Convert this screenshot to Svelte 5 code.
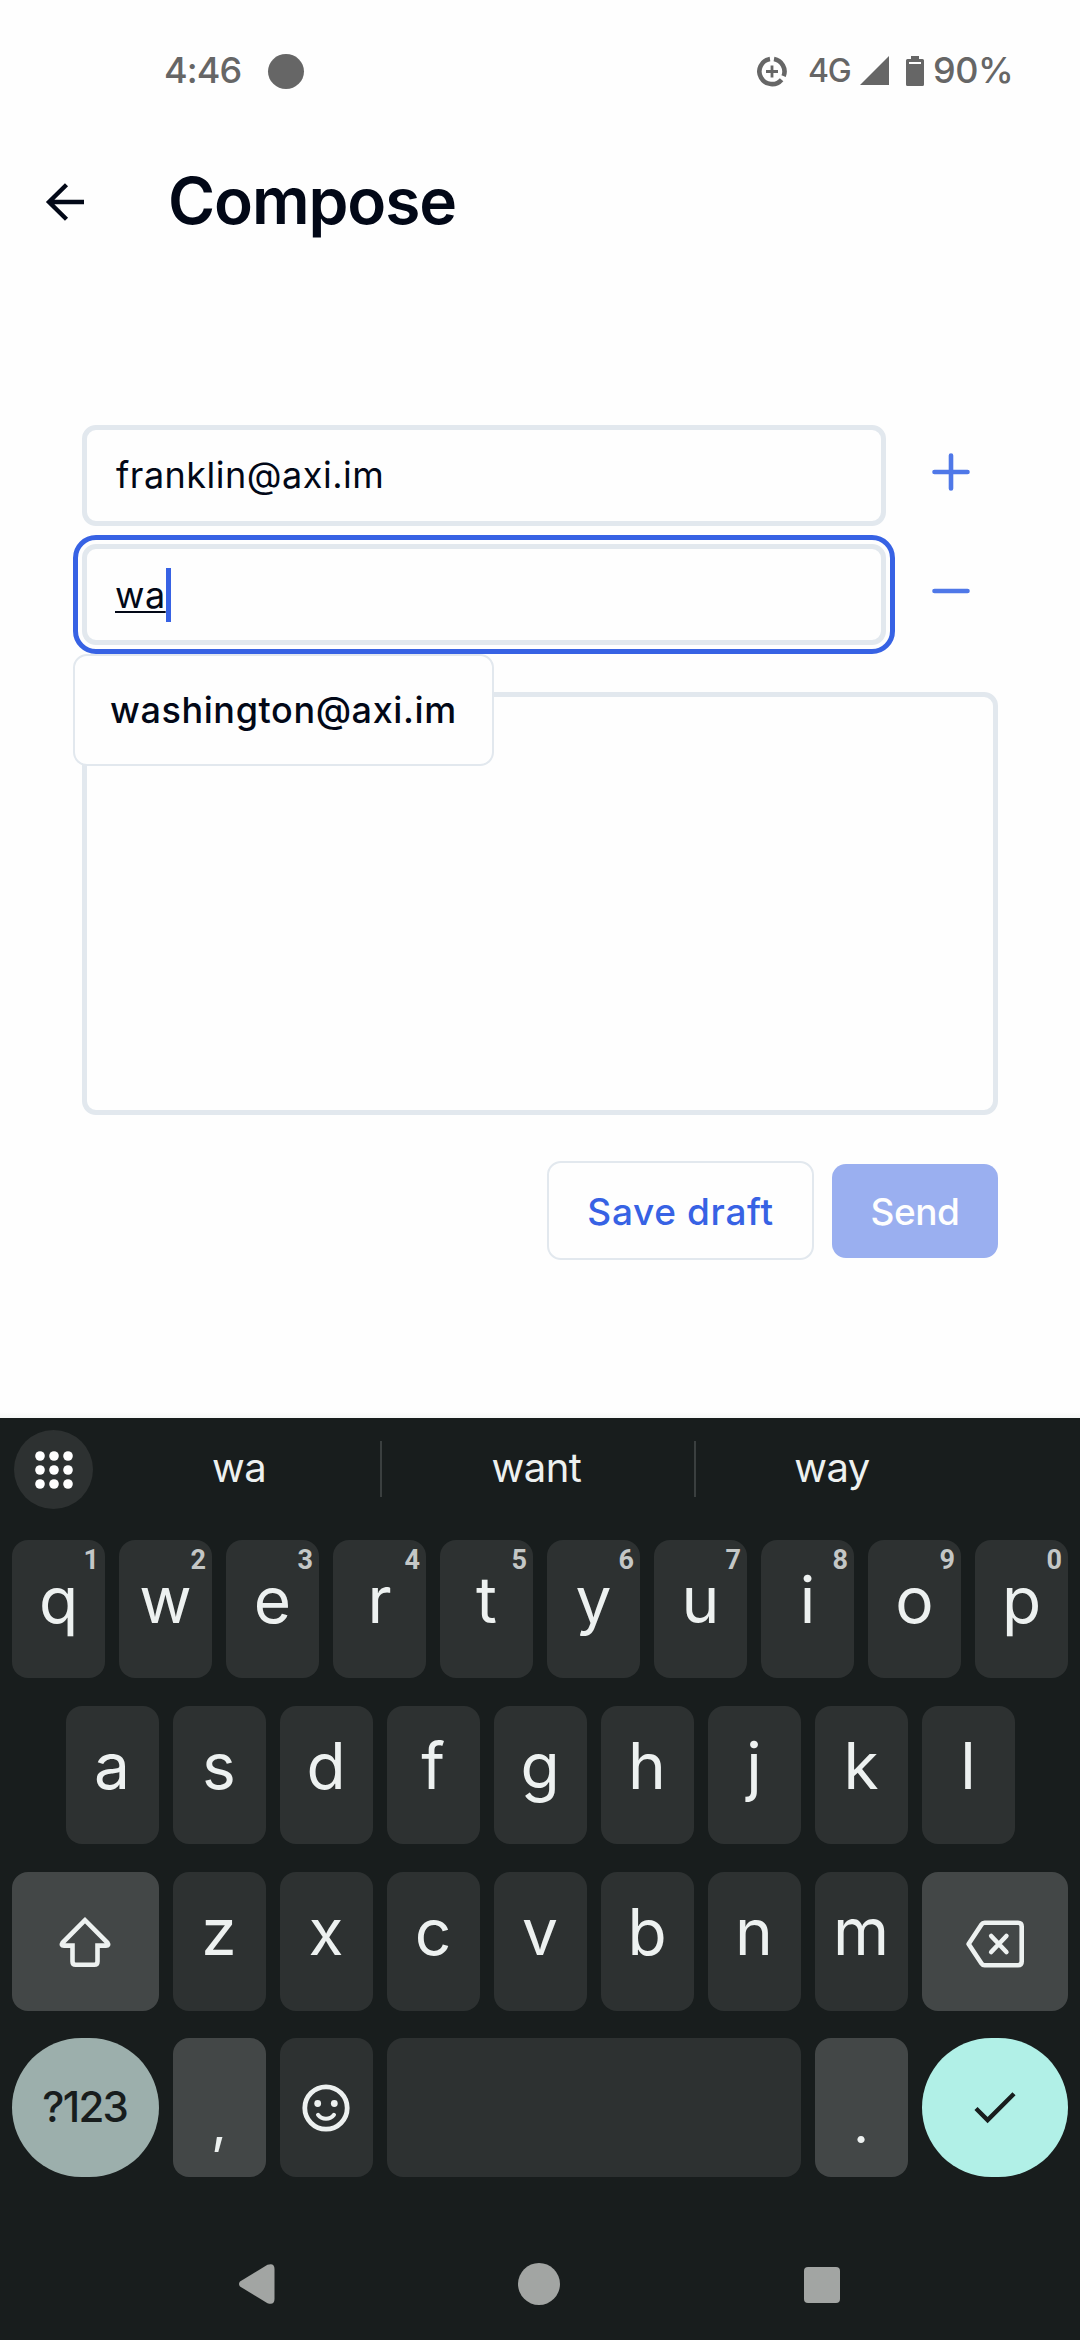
<script>
  const topRow = [...'qwertyuiop'].map((letter, i) => ({ letter, hint: String((i + 1) % 10) }));
  const middleRow = [...'asdfghjkl'];
  const bottomRow = [...'zxcvbnm'];
  const dots = [0, 1, 2].flatMap((r) => [0, 1, 2].map((c) => ({ x: 5 + c * 14, y: 5 + r * 14 })));
</script>

<div class="screen">
  <div class="status">
    <span class="clock">4:46</span>
    <span class="notice"></span>
    <svg class="saver" width="30" height="31" viewBox="0 0 30 31" fill="none" stroke="#666" stroke-width="4.6">
      <path d="M17 3.1A12.6 12.6 0 0 1 26.6 20.2" />
      <path d="M24.6 23.7A12.6 12.6 0 1 1 13 3.1" />
      <path d="M15 9.5v12M9 15.5h12" stroke-width="2.8" />
    </svg>
    <span class="network">4G</span>
    <svg class="signal" width="29" height="29" viewBox="0 0 29 29"><path d="M29 0v29H0z" fill="#666" /></svg>
    <svg class="battery" width="18" height="30" viewBox="0 0 18 30">
      <path fill="#666" fill-rule="evenodd" d="M5 0h8v3h3.5Q18 3 18 4.500V28.500Q18 30 16.500 30H1.500Q0 30 0 28.500V4.500Q0 3 1.500 3H5zM3 6v2h12V6z" />
    </svg>
    <span class="percent">90%</span>
  </div>

  <header>
    <svg width="40" height="40" viewBox="0 0 40 40" fill="none" stroke="#020817" stroke-width="4.4">
      <path d="M39 20H4M21.500 2.700L4 20l17.500 17.300" />
    </svg>
    <h1>Compose</h1>
  </header>

  <main>
    <div class="recipient">
      <div class="field"><span class="address">franklin@axi.im</span></div>
      <svg width="40" height="40" viewBox="0 0 40 40" stroke="#4f78e8" stroke-width="4.600" stroke-linecap="round">
        <path d="M3.500 20h33M20 3.500v33" />
      </svg>
    </div>
    <div class="recipient">
      <div class="field focused">
        <span class="typing">wa</span><i class="caret"></i>
        <div class="popup">washington@axi.im</div>
      </div>
      <svg width="40" height="40" viewBox="0 0 40 40" stroke="#4f78e8" stroke-width="4.600" stroke-linecap="round">
        <path d="M3.500 20h33" />
      </svg>
    </div>
    <div class="message"></div>
    <div class="actions">
      <button class="save">Save draft</button>
      <button class="send">Send</button>
    </div>
  </main>

  <section class="keyboard">
    <div class="strip">
      <span class="apps">
        <svg width="38" height="38" viewBox="0 0 38 38" fill="#fff">
          {#each dots as d}<circle cx={d.x} cy={d.y} r="4.8" />{/each}
        </svg>
      </span>
      <span class="word first">wa</span>
      <span class="word second">want</span>
      <span class="word third">way</span>
    </div>

    <div class="rows">
      <div class="row">
        {#each topRow as k}
          <div class="key"><span class="hint">{k.hint}</span>{k.letter}</div>
        {/each}
      </div>
      <div class="row">
        {#each middleRow as k}<div class="key">{k}</div>{/each}
      </div>
      <div class="row tall">
        <div class="key wide light">
          <svg width="56" height="54" viewBox="0 0 56 54" fill="none" stroke="#edf1f0" stroke-width="4.600">
            <path d="M28 5.200L5.500 27.800Q3.500 30.600 7 30.600H15.500V46.500Q15.500 49.700 18.700 49.700H37.300Q40.500 49.700 40.500 46.500V30.600H49Q52.500 30.600 50.500 27.800Z" />
          </svg>
        </div>
        {#each bottomRow as k}<div class="key">{k}</div>{/each}
        <div class="key wide light backspace">
          <svg width="60" height="48" viewBox="0 0 60 48" fill="none" stroke="#edf1f0" stroke-width="4.600" stroke-linejoin="round" stroke-linecap="round">
            <path d="M3.600 24L16.500 4.500Q17.600 2.800 19.600 2.800H53Q56.700 2.800 56.700 6.500V41.500Q56.700 45.200 53 45.200H19.600Q17.600 45.200 16.500 43.500Z" />
            <path d="M26.200 16L41.400 32M41.400 16L26.200 32" />
          </svg>
        </div>
      </div>
      <div class="row tall">
        <div class="key wide symbols">?123</div>
        <div class="key light punct">,</div>
        <div class="key icon">
          <svg width="48" height="48" viewBox="0 0 48 48" fill="none" stroke="#edf1f0">
            <circle cx="24" cy="24" r="21.200" stroke-width="4.800" />
            <circle cx="15.700" cy="19.500" r="3.400" fill="#edf1f0" stroke="none" />
            <circle cx="32.300" cy="19.500" r="3.400" fill="#edf1f0" stroke="none" />
            <path d="M16 30.800Q19 34.800 24 34.800T32 30.800" stroke-width="4" stroke-linecap="round" />
          </svg>
        </div>
        <div class="key space"></div>
        <div class="key light punct">.</div>
        <div class="key wide enter">
          <svg width="42" height="34" viewBox="0 0 42 34" fill="none" stroke="#181d1d" stroke-width="4.400">
            <path d="M2 17.500L13.600 29.100L40 2.700" />
          </svg>
        </div>
      </div>
    </div>

    <nav>
      <svg width="38" height="42" viewBox="0 0 38 42" fill="#a2a5a3">
        <path d="M2 18.500L29.500 1.800Q36.500 -.5 36.500 6V36Q36.500 42.500 29.500 40.200L2 23.500Q0 21 2 18.500Z" />
      </svg>
      <span class="home"></span>
      <span class="recent"></span>
    </nav>
  </section>
</div>

<style>
  :global(body) { margin: 0; background: #fff; }
  .screen {
    width: 1080px;
    height: 2340px;
    display: flex;
    flex-direction: column;
    overflow: hidden;
    background: #fefefe;
    color: #020817;
    font-family: Inter, sans-serif;
    box-sizing: border-box;
  }
  .screen * { box-sizing: border-box; }
  svg { display: block; flex: none; }

  .status {
    height: 141px;
    padding: 0 68px 0 164px;
    display: flex;
    align-items: center;
    color: #666;
    font-size: 36px;
    font-weight: 500;
  }
  .clock { letter-spacing: -0.9px; width: 104px; padding-bottom: 1px; }
  .notice { width: 36px; height: 35px; border-radius: 50%; background: #666; margin-top: 1px; }
  .saver { margin-left: auto; margin-top: 1px; }
  .network { font-size: 32px; letter-spacing: -1.300px; margin-left: 21px; width: 51px; }
  .signal { margin-left: 1px; }
  .battery { margin-left: 17px; }
  .percent { letter-spacing: -0.4px; margin-left: 9px; width: 79px; padding-bottom: 1px; }

  header {
    height: 121px;
    padding-left: 45px;
    display: flex;
    align-items: center;
  }
  h1 {
    margin: 0 0 0 83px;
    padding-bottom: 2px;
    font-size: 64px;
    font-weight: 600;
    letter-spacing: -1.100px;
    line-height: 80px;
  }

  main {
    flex: none;
    height: 1156px;
    padding: 163px 82px 0;
    font-size: 36px;
    background: linear-gradient(to bottom, #fefefe 1150px, #f5f7f6 1156px);
  }
  .recipient {
    display: flex;
    align-items: center;
    gap: 45px;
    margin-bottom: 18px;
  }
  .recipient > svg { margin-bottom: 8px; }
  .field {
    position: relative;
    width: 804px;
    height: 101px;
    padding-left: 28px;
    display: flex;
    align-items: center;
    border: 5px solid #e2e8ee;
    border-radius: 14px;
    letter-spacing: 0.500px;
  }
  .field.focused { outline: 5px solid #3762e4; outline-offset: 4px; }
  .address { padding: 0 0 2px 1px; }
  .typing { text-decoration: underline; text-decoration-thickness: 2px; text-underline-offset: 3px; text-decoration-skip-ink: none; }
  .caret { width: 5px; height: 54px; background: #3762e4; }
  .popup {
    position: absolute;
    z-index: 1;
    top: 105px;
    left: -14px;
    width: 421px;
    height: 112px;
    padding-left: 35px;
    border: 2px solid #e2e8ee;
    border-radius: 14px;
    background: #fefefe;
    font-weight: 500;
    letter-spacing: 0.600px;
    line-height: 108px;
  }
  .message {
    height: 423px;
    margin-top: 47px;
    border: 5px solid #e2e8ee;
    border-radius: 14px;
  }
  .actions {
    display: flex;
    justify-content: flex-end;
    align-items: center;
    gap: 18px;
    margin-top: 46px;
  }
  button {
    padding: 1px 0 0;
    border: 0;
    border-radius: 14px;
    font: 500 37px Inter, sans-serif;
  }
  .save {
    width: 267px;
    height: 99px;
    border: 2px solid #e2e8ee;
    background: #fefefe;
    color: #3762e4;
    letter-spacing: 0.650px;
  }
  .send {
    width: 166px;
    height: 94px;
    background: #9aaff0;
    color: #fefefe;
    letter-spacing: -0.400px;
  }

  .keyboard {
    height: 922px;
    background: #181d1d;
    color: #edf1f0;
  }
  .strip {
    height: 103px;
    display: flex;
    align-items: center;
    padding-left: 14px;
  }
  .apps {
    width: 79px;
    height: 79px;
    margin-right: 5px;
    border-radius: 50%;
    background: #2d3131;
    display: grid;
    place-items: center;
  }
  .word {
    height: 56px;
    margin-bottom: 1px;
    line-height: 54px;
    text-align: center;
    font-size: 40px;
    letter-spacing: -0.500px;
  }
  .first { width: 284px; border-right: 2px solid #3a3f3f; }
  .second { width: 314px; border-right: 2px solid #3a3f3f; padding-right: 3px; }
  .third { width: 272px; }

  .rows {
    display: flex;
    flex-direction: column;
    gap: 28px;
    padding: 19px 12px 0;
  }
  .row { display: flex; justify-content: center; gap: 14px; height: 138px; }
  .row.tall { height: 139px; }
  .row.tall + .row.tall { margin-top: -1px; }
  .key {
    position: relative;
    flex: none;
    width: 93px;
    border-radius: 16px;
    background: #2d3131;
    font-size: 64px;
    line-height: 120px;
    text-align: center;
  }
  .hint {
    position: absolute;
    top: 8px;
    right: 6px;
    font: 700 27px/24px Roboto, sans-serif;
    color: #c4c7c6;
  }
  .light { background: #434747; }
  .key.wide { width: 146.5px; }
  .wide, .icon, .punct { display: grid; place-items: center; }
  .backspace { padding-top: 4px; }
  .symbols, .enter { border-radius: 70px; }
  .symbols {
    background: #9cafac;
    color: #181d1d;
    font-size: 42px;
    font-weight: 500;
    letter-spacing: -1.700px;
    line-height: 50px;
    padding: 0 1px 2px 0;
  }
  .punct { font-size: 54px; line-height: 60px; padding-top: 32px; }
  .key.space { width: 414px; }
  .enter { background: #b1f0e7; }

  nav {
    display: flex;
    align-items: center;
    height: 42px;
    margin-top: 86px;
    padding-left: 238px;
  }
  .home { width: 42px; height: 42px; margin-left: 242px; border-radius: 50%; background: #a2a5a3; }
  .recent { width: 36px; height: 36px; margin: 2px 0 0 244px; border-radius: 4px; background: #a2a5a3; }
</style>
